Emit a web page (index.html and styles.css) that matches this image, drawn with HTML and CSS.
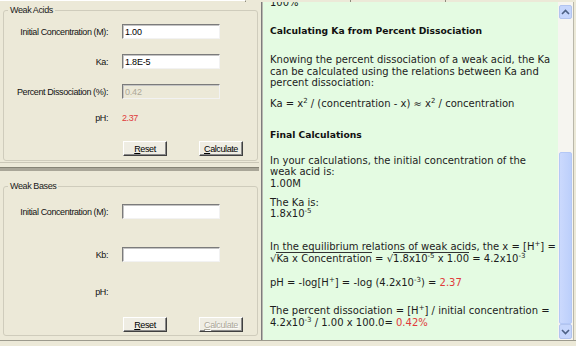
FILE: index.html
```html
<!DOCTYPE html>
<html>
<head>
<meta charset="utf-8">
<title>Weak Acids and Bases</title>
<link rel="stylesheet" href="styles.css">
</head>
<body>
<div class="topstrip">
  <span class="ts ts-a"></span><span class="ts ts-b"></span><span class="ts ts-c"></span><span class="ts ts-d"></span>
</div>
<div class="main">
  <div class="left">
    <div class="sec sec-top">
      <div class="group group-acid">
        <span class="legend">Weak Acids</span>
        <div class="row"><label class="lbl">Initial Concentration (M):</label><input class="field" type="text" value="1.00"></div>
        <div class="row"><label class="lbl">Ka:</label><input class="field" type="text" value="1.8E-5"></div>
        <div class="row"><label class="lbl">Percent Dissociation (%):</label><input class="field" type="text" value="0.42" disabled></div>
        <div class="row row-ph"><span class="lbl">pH:</span><span class="val red">2.37</span></div>
        <div class="btns"><button class="btn"><u>R</u>eset</button><button class="btn"><u>C</u>alculate</button></div>
      </div>
    </div>
    <div class="splitter"></div>
    <div class="sec sec-bottom">
      <div class="group group-base">
        <span class="legend">Weak Bases</span>
        <div class="row"><label class="lbl">Initial Concentration (M):</label><input class="field" type="text" value=""></div>
        <div class="row r-kb"><label class="lbl">Kb:</label><input class="field" type="text" value=""></div>
        <div class="row row-ph"><span class="lbl">pH:</span><span class="val"></span></div>
        <div class="btns"><button class="btn"><u>R</u>eset</button><button class="btn" disabled><u>C</u>alculate</button></div>
      </div>
    </div>
  </div>
  <div class="pane">
    <div class="doc">
      <p class="t-top">100%</p>
      <h3 class="hd t-h1">Calculating Ka from Percent Dissociation</h3>
      <p class="t-know">Knowing the percent dissociation of a weak acid, the Ka<br>can be calculated using the relations between Ka and<br>percent dissociation:</p>
      <p class="t-ka">Ka = x<sup>2</sup> / (concentration - x) &#8776; x<sup>2</sup> / concentration</p>
      <h3 class="hd t-final">Final Calculations</h3>
      <p class="t-your">In your calculations, the initial concentration of the<br>weak acid is:<br>1.00M</p>
      <p class="t-kais">The Ka is:<br>1.8x10<sup>-5</sup></p>
      <p class="t-eq">In the equilibrium relations of weak acids, the x = [H<sup>+</sup>] =<span class="l2">&#8730;<span class="rad">Ka x Concentration</span> = &#8730;<span class="rad">1.8x10<sup>-5</sup> x 1.00</span> = 4.2x10<sup>-3</sup></span></p>
      <p class="t-ph">pH = -log[H<sup>+</sup>] = -log (4.2x10<sup>-3</sup>) = <span class="red">2.37</span></p>
      <p class="t-pct">The percent dissociation = [H<sup>+</sup>] / initial concentration =<span class="l2 l2b">4.2x10<sup>-3</sup> / 1.00 x 100.0= <span class="red">0.42%</span></span></p>
    </div>
    <div class="scrollbar">
      <div class="sb-btn"><svg width="9" height="6" viewBox="0 0 9 6"><polyline points="1,5 4.5,1.5 8,5" fill="none" stroke="#4d6185" stroke-width="1.6"/></svg></div>
      <div class="sb-space"></div>
      <div class="sb-thumb"></div>
      <div class="sb-btn sb-down"><svg width="9" height="6" viewBox="0 0 9 6"><polyline points="1,1 4.5,4.5 8,1" fill="none" stroke="#4d6185" stroke-width="1.6"/></svg></div>
    </div>
  </div>
</div>
</body>
</html>
```

FILE: styles.css
```css
* { box-sizing: border-box; }
html, body { margin: 0; padding: 0; }
body {
  width: 576px;
  height: 346px;
  overflow: hidden;
  background: #ece9d8;
  font-family: "Liberation Sans", Arial, sans-serif;
  font-size: 9px;
  letter-spacing: -0.4px;
  color: #111;
}

/* remains of the header row above */
.topstrip { display: flex; height: 2px; }
.ts { height: 2px; border-right: 1px solid #8e8b7c; }
.ts-a { width: 246px; border-top: 1px solid #fff; }
.ts-b { width: 105px; }
.ts-c { width: 95px; }
.ts-d { flex: 1; border-right: 0; }

.main {
  display: flex;
  height: 339px;
  border-bottom: 1px solid #9c9a8d;
}

/* left form panel */
.left { width: 259px; display: flex; flex-direction: column; }
.sec-top { height: 161px; padding: 8px 0 0 3px; border-bottom: 1px solid #cac7b7; }
.splitter { height: 4px; margin-top: 4px; background: #a9a698; border-top: 1px solid #858375; }
.sec-bottom { flex: 1; padding: 15px 0 0 3px; }

.group {
  position: relative;
  width: 255px;
  border: 1px solid #cfccbc;
  border-radius: 3px;
  display: flex;
  flex-direction: column;
}
.group-acid { height: 151px; padding-top: 13px; gap: 15px; }
.group-base { height: 150px; padding-top: 17px; }
.legend {
  position: absolute;
  top: -6px;
  left: 4px;
  padding: 0 2px;
  background: #ece9d8;
  line-height: 11px;
  white-space: nowrap;
  color: #1a1a1a;
}

.row {
  display: grid;
  grid-template-columns: 104px 98px;
  column-gap: 14px;
  align-items: center;
  height: 15px;
}
.lbl { text-align: right; white-space: nowrap; }
.field {
  width: 98px;
  height: 15px;
  margin: 0;
  padding: 0 2px;
  font: inherit;
  letter-spacing: -0.2px;
  color: #000;
  background: #fff;
  border: 1px solid;
  border-color: #7b7b7b #f2f2f2 #f2f2f2 #7b7b7b;
  box-shadow: inset 1px 1px 0 #c4c4c4;
  outline: none;
}
.field:disabled { background: #ece9d8; color: #aca899; }
.row-ph { height: 12px; }
.group-acid .row-ph { margin-top: -2px; }

.btns { display: flex; gap: 32px; padding-left: 119px; }
.group-acid .btns { margin-top: 2px; }
.btn {
  width: 44px;
  height: 15px;
  padding: 0;
  margin: 0;
  font: inherit;
  letter-spacing: inherit;
  line-height: 12px;
  white-space: nowrap;
  color: #000;
  background: #efede3;
  border: 1px solid;
  border-color: #fff #404040 #404040 #fff;
  box-shadow: inset -1px -1px 0 #8a8a8a;
}
.btn:disabled { color: #aca899; text-shadow: 1px 1px 0 #fff; }

.group-base .r-kb { margin-top: 28px; }
.group-base .row-ph { margin-top: 24px; }
.group-base .btns { margin-top: 19px; }

.red { color: #e03a3a; }

/* right explanation pane */
.pane {
  width: 313px;
  margin-left: 2px;
  display: flex;
  background: #e4fbe2;
  border-left: 1px solid #7d7d7d;
  border-right: 1px solid #b9b7aa;
  box-shadow: inset 1px 0 0 #b8b8b0;
}
.doc {
  flex: 1;
  overflow: hidden;
  padding-left: 8px;
  font-family: "DejaVu Sans", Verdana, sans-serif;
  font-size: 10px;
  line-height: 11.5px;
  letter-spacing: 0;
  color: #1c1c1c;
}
.doc p, .doc h3 { margin: 0; }
.doc .hd { font-size: 9.2px; font-weight: bold; color: #111; }
.doc sup { font-size: 7px; line-height: 0; vertical-align: 4px; }
.l2 { display: block; margin-top: 1px; }
.l2b { margin-top: 0.5px; }
.rad { border-top: 1px solid #333; }

.t-top { margin-top: -5px !important; }
.t-h1 { margin-top: 16.5px !important; }
.t-know { margin-top: 17.5px !important; }
.t-ka { margin-top: 9.5px !important; }
.t-final { margin-top: 19px !important; }
.t-your { margin-top: 14.5px !important; }
.t-kais { margin-top: 7.5px !important; }
.t-eq { margin-top: 21px !important; }
.t-ph { margin-top: 12.5px !important; }
.t-pct { margin-top: 16px !important; }

.scrollbar {
  width: 15px;
  background: #f6f5f0;
  display: flex;
  flex-direction: column;
  padding: 3px 1px 1px;
}
.sb-btn {
  height: 14px;
  border-radius: 2px;
  background: #c6d6fc;
  border: 1px solid #b2c4ef;
  display: flex;
  align-items: center;
  justify-content: center;
}
.sb-down { height: 15px; }
.sb-space { flex: 1; }
.sb-thumb {
  height: 172px;
  border-radius: 2px;
  background: linear-gradient(to right, #cbd9fd, #bccffb);
  border: 1px solid #b4c8f6;
}
```
